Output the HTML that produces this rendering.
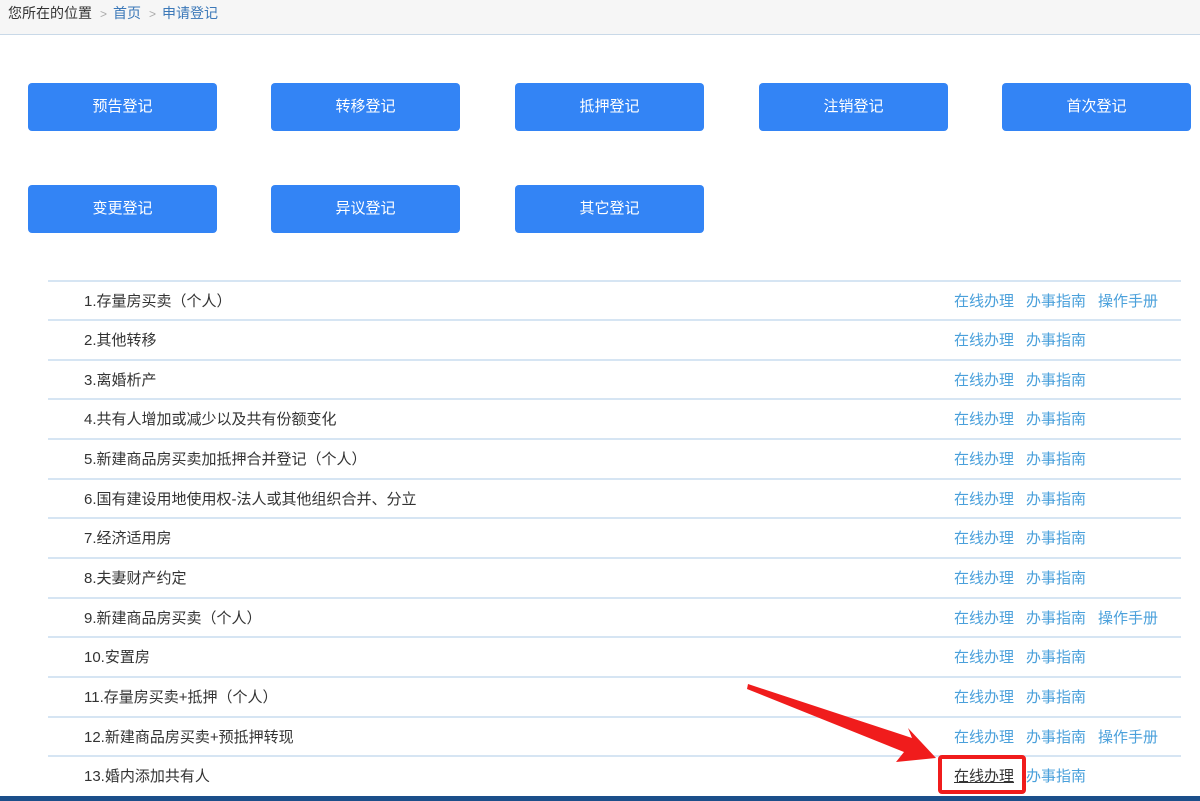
<!DOCTYPE html>
<html><head><meta charset="utf-8"><style>
*{margin:0;padding:0;box-sizing:border-box}
body{width:1200px;height:801px;overflow:hidden;background:#fff;font-family:"Liberation Sans","Noto Sans CJK SC",sans-serif;position:relative}
.bc{height:35px;background:#f6f6f6;border-bottom:1px solid #c9d9e8;font-size:14px;line-height:27px;padding-left:8px;color:#333}
.bc .s{color:#aaa;margin:0 6px 0 8px;font-size:12px}
.bc a{color:#3b78b8}
.btn{position:absolute;width:189px;height:48px;background:#3384f5;border-radius:4px;color:#fff;font-size:15px;text-align:center;line-height:48px}
.row{position:absolute;left:48px;width:1133px;height:40px;border-top:2px solid #d6e5f3;font-size:15px;color:#333;line-height:40px}
.row .t{position:absolute;left:36px}
.row .l{position:absolute;left:906px;color:#4aa0db}
.row .l span{margin-right:12px}
</style></head><body>
<div class="bc">您所在的位置<span class="s">&gt;</span><a>首页</a><span class="s">&gt;</span><a>申请登记</a></div>
<div class="btn" style="left:28px;top:83px">预告登记</div>
<div class="btn" style="left:271px;top:83px">转移登记</div>
<div class="btn" style="left:515px;top:83px">抵押登记</div>
<div class="btn" style="left:759px;top:83px">注销登记</div>
<div class="btn" style="left:1002px;top:83px">首次登记</div>
<div class="btn" style="left:28px;top:185px">变更登记</div>
<div class="btn" style="left:271px;top:185px">异议登记</div>
<div class="btn" style="left:515px;top:185px">其它登记</div>

<div class="row" style="top:280px"><span class="t">1.存量房买卖（个人）</span><span class="l"><span>在线办理</span><span>办事指南</span><span>操作手册</span></span></div>
<div class="row" style="top:319px"><span class="t">2.其他转移</span><span class="l"><span>在线办理</span><span>办事指南</span></span></div>
<div class="row" style="top:359px"><span class="t">3.离婚析产</span><span class="l"><span>在线办理</span><span>办事指南</span></span></div>
<div class="row" style="top:398px"><span class="t">4.共有人增加或减少以及共有份额变化</span><span class="l"><span>在线办理</span><span>办事指南</span></span></div>
<div class="row" style="top:438px"><span class="t">5.新建商品房买卖加抵押合并登记（个人）</span><span class="l"><span>在线办理</span><span>办事指南</span></span></div>
<div class="row" style="top:478px"><span class="t">6.国有建设用地使用权-法人或其他组织合并、分立</span><span class="l"><span>在线办理</span><span>办事指南</span></span></div>
<div class="row" style="top:517px"><span class="t">7.经济适用房</span><span class="l"><span>在线办理</span><span>办事指南</span></span></div>
<div class="row" style="top:557px"><span class="t">8.夫妻财产约定</span><span class="l"><span>在线办理</span><span>办事指南</span></span></div>
<div class="row" style="top:597px"><span class="t">9.新建商品房买卖（个人）</span><span class="l"><span>在线办理</span><span>办事指南</span><span>操作手册</span></span></div>
<div class="row" style="top:636px"><span class="t">10.安置房</span><span class="l"><span>在线办理</span><span>办事指南</span></span></div>
<div class="row" style="top:676px"><span class="t">11.存量房买卖+抵押（个人）</span><span class="l"><span>在线办理</span><span>办事指南</span></span></div>
<div class="row" style="top:716px"><span class="t">12.新建商品房买卖+预抵押转现</span><span class="l"><span>在线办理</span><span>办事指南</span><span>操作手册</span></span></div>
<div class="row" style="top:755px"><span class="t">13.婚内添加共有人</span><span class="l"><span style="color:#333;text-decoration:underline">在线办理</span><span>办事指南</span></span></div>
<div style="position:absolute;left:0;top:796px;width:1200px;height:5px;background:#1b4f8a"></div>
<div style="position:absolute;left:938px;top:755px;width:88px;height:39px;border:4px solid #f01c1c;border-radius:4px"></div>
<svg style="position:absolute;left:0;top:0" width="1200" height="801"><polygon points="748,684 912,738 908,728 936,758 896,762 904,752 747,689" fill="#f01c1c"/></svg>
</body></html>
